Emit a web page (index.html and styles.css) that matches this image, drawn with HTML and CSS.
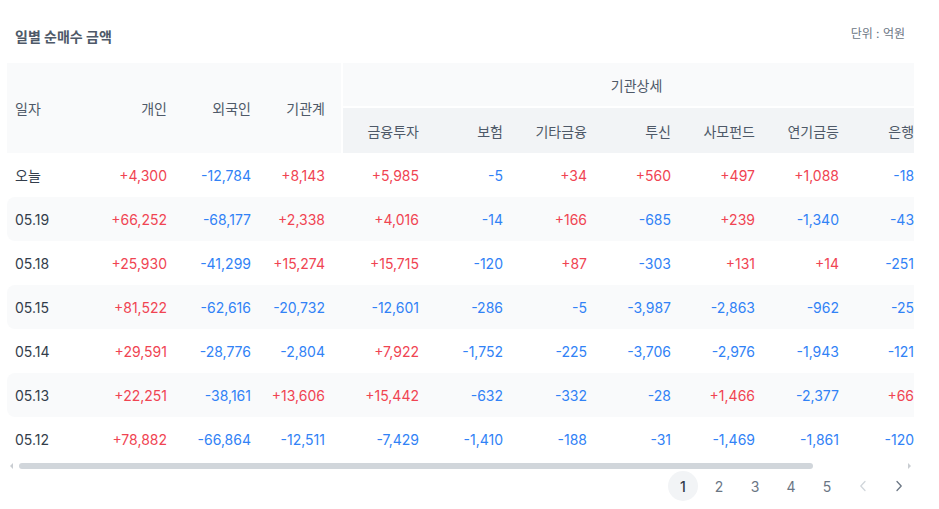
FILE: index.html
```html
<!DOCTYPE html>
<html lang="ko">
<head>
<meta charset="utf-8">
<title>일별 순매수 금액</title>
<link rel="stylesheet" href="styles.css">
</head>
<body>
<div class="panel">
  <div class="title-row">
    <h2 class="title">일별 순매수 금액</h2>
    <span class="unit">단위 : 억원</span>
  </div>
  <div class="scroll">
    <table class="grid">
      <colgroup>
        <col class="c-date"><col class="c-84"><col class="c-84"><col class="c-inst">
        <col class="c-fin"><col class="c-84"><col class="c-84"><col class="c-84"><col class="c-84"><col class="c-84">
        <col class="c-bank">
      </colgroup>
      <thead>
        <tr class="h1">
          <th rowspan="2" class="left">일자</th>
          <th rowspan="2">개인</th>
          <th rowspan="2">외국인</th>
          <th rowspan="2">기관계</th>
          <th colspan="7" class="group sep">기관상세</th>
        </tr>
        <tr class="h2">
          <th class="sep">금융투자</th>
          <th>보험</th>
          <th>기타금융</th>
          <th>투신</th>
          <th>사모펀드</th>
          <th>연기금등</th>
          <th>은행</th>
        </tr>
      </thead>
      <tbody>
        <tr>
          <td class="left">오늘</td>
          <td class="up">+4,300</td><td class="dn">-12,784</td><td class="up">+8,143</td>
          <td class="up">+5,985</td><td class="dn">-5</td><td class="up">+34</td><td class="up">+560</td><td class="up">+497</td><td class="up">+1,088</td><td class="dn">-18</td>
        </tr>
        <tr class="alt">
          <td class="left">05.19</td>
          <td class="up">+66,252</td><td class="dn">-68,177</td><td class="up">+2,338</td>
          <td class="up">+4,016</td><td class="dn">-14</td><td class="up">+166</td><td class="dn">-685</td><td class="up">+239</td><td class="dn">-1,340</td><td class="dn">-43</td>
        </tr>
        <tr>
          <td class="left">05.18</td>
          <td class="up">+25,930</td><td class="dn">-41,299</td><td class="up">+15,274</td>
          <td class="up">+15,715</td><td class="dn">-120</td><td class="up">+87</td><td class="dn">-303</td><td class="up">+131</td><td class="up">+14</td><td class="dn">-251</td>
        </tr>
        <tr class="alt">
          <td class="left">05.15</td>
          <td class="up">+81,522</td><td class="dn">-62,616</td><td class="dn">-20,732</td>
          <td class="dn">-12,601</td><td class="dn">-286</td><td class="dn">-5</td><td class="dn">-3,987</td><td class="dn">-2,863</td><td class="dn">-962</td><td class="dn">-25</td>
        </tr>
        <tr>
          <td class="left">05.14</td>
          <td class="up">+29,591</td><td class="dn">-28,776</td><td class="dn">-2,804</td>
          <td class="up">+7,922</td><td class="dn">-1,752</td><td class="dn">-225</td><td class="dn">-3,706</td><td class="dn">-2,976</td><td class="dn">-1,943</td><td class="dn">-121</td>
        </tr>
        <tr class="alt">
          <td class="left">05.13</td>
          <td class="up">+22,251</td><td class="dn">-38,161</td><td class="up">+13,606</td>
          <td class="up">+15,442</td><td class="dn">-632</td><td class="dn">-332</td><td class="dn">-28</td><td class="up">+1,466</td><td class="dn">-2,377</td><td class="up">+66</td>
        </tr>
        <tr>
          <td class="left">05.12</td>
          <td class="up">+78,882</td><td class="dn">-66,864</td><td class="dn">-12,511</td>
          <td class="dn">-7,429</td><td class="dn">-1,410</td><td class="dn">-188</td><td class="dn">-31</td><td class="dn">-1,469</td><td class="dn">-1,861</td><td class="dn">-120</td>
        </tr>
      </tbody>
    </table>
  </div>
  <div class="sbar">
    <span class="arrow arrow-l"></span>
    <span class="thumb"></span>
    <span class="arrow arrow-r"></span>
  </div>
  <nav class="pager">
    <span class="pg active">1</span>
    <span class="pg">2</span>
    <span class="pg">3</span>
    <span class="pg">4</span>
    <span class="pg">5</span>
    <span class="pg nav disabled"><svg width="8" height="12" viewBox="0 0 8 12"><path d="M6 1.5 1.8 6 6 10.5" fill="none" stroke="currentColor" stroke-width="1.3" stroke-linecap="round" stroke-linejoin="round"/></svg></span>
    <span class="pg nav"><svg width="8" height="12" viewBox="0 0 8 12"><path d="M2 1.5 6.2 6 2 10.5" fill="none" stroke="currentColor" stroke-width="1.3" stroke-linecap="round" stroke-linejoin="round"/></svg></span>
  </nav>
</div>
</body>
</html>
```

FILE: styles.css
```css
* { box-sizing: border-box; }
html, body { margin: 0; padding: 0; background: #fff; }
body {
  font-family: Inter, "Noto Sans CJK KR", "Noto Sans", sans-serif;
  color: #333d4b;
  font-size: 14px;
}
.panel {
  width: 914px;
  padding: 26px 0 0 7px;
}
.title-row {
  display: flex;
  justify-content: space-between;
  align-items: flex-start;
  height: 22px;
  margin-bottom: 15px;
  padding: 0 9px 0 8px;
}
.title {
  margin: 0;
  font-size: 14px;
  line-height: 22px;
  font-weight: 700;
  color: #4e5968;
}
.unit {
  font-size: 12px;
  line-height: 16px;
  color: #6b7684;
}
.scroll {
  width: 907px;
  overflow: hidden;
}
.grid {
  border-collapse: separate;
  border-spacing: 0;
  table-layout: fixed;
  width: 923px;
}
.c-date { width: 92px; }
.c-84 { width: 84px; }
.c-inst { width: 74px; }
.c-fin { width: 94px; }
.c-bank { width: 75px; }

.grid th {
  font-weight: 400;
  color: #4e5968;
  text-align: right;
  padding: 0 16px 0 0;
  white-space: nowrap;
  background: #f9fafb;
}
.grid th.left, .grid td.left {
  text-align: left;
  padding-left: 8px;
}
.grid .h1 th { height: 45px; }
.grid .h1 th.group {
  text-align: center;
  padding: 0;
  border-bottom: 2px solid #fff;
}
.grid .h2 th {
  height: 45px;
  background: #f2f4f6;
}
.grid th.sep { border-left: 2px solid #fff; }

.grid td {
  height: 44px;
  padding: 0 16px 0 0;
  text-align: right;
  white-space: nowrap;
  font-size: 14px;
}
.grid td.left { color: #333d4b; }
.grid tr.alt td { background: #f9fafb; }
.grid tr.alt td:first-child { border-radius: 8px 0 0 8px; }
.up { color: #f04452; }
.dn { color: #3182f6; }

.sbar {
  width: 907px;
  height: 10px;
  display: flex;
  align-items: center;
  padding: 0 3px;
}
.arrow {
  width: 0;
  height: 0;
  border-top: 3px solid transparent;
  border-bottom: 3px solid transparent;
}
.arrow-l { border-right: 3px solid #c9cdd2; }
.arrow-r { border-left: 3px solid #c9cdd2; margin-left: auto; }
.thumb {
  width: 794px;
  height: 6px;
  margin-left: 6px;
  border-radius: 3px;
  background: #d1d6db;
}

.pager {
  width: 907px;
  display: flex;
  justify-content: flex-end;
  gap: 6px;
}
.pg {
  width: 30px;
  height: 30px;
  border-radius: 50%;
  display: flex;
  align-items: center;
  justify-content: center;
  font-size: 14px;
  color: #6b7684;
}
.pg.active {
  background: #f2f4f6;
  color: #333d4b;
  font-weight: 500;
}
.pg.disabled { color: #d1d6db; }
.pg svg { display: block; }
```
